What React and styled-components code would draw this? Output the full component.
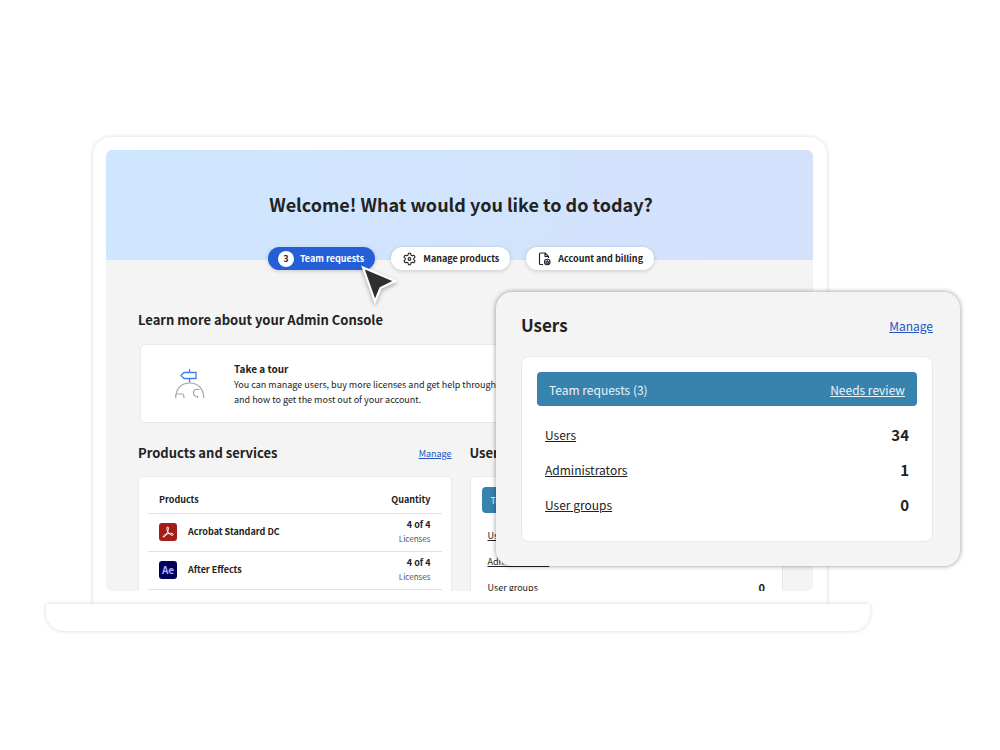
import React from 'react';
import styled, { createGlobalStyle } from 'styled-components';

const GlobalStyle = createGlobalStyle`
  * {
    box-sizing: border-box;
  }

  body {
    margin: 0;
    background: #fff;
    color: #222;
    font-family: "Noto Sans CJK SC", "Noto Sans", sans-serif;
    font-size: 10px;
  }

  h1, h2, h3, p, ul {
    margin: 0;
    padding: 0;
  }
`;

const Stage = styled.main`
  position: relative;
  padding: 137px 130px 40px 46px;
`;

/* Laptop */

const Lid = styled.div`
  margin: 0 43px 0 47px;
  padding: 13px 14px 13px 13px;
  background: #fff;
  border-radius: 18px 18px 0 0;
  box-shadow: 0 0 4px rgba(0, 0, 0, 0.16);
`;

const Base = styled.div`
  position: relative;
  height: 27px;
  background: #fff;
  border-radius: 2px 2px 18px 18px;
  box-shadow: 0 0 4px rgba(0, 0, 0, 0.16);
`;

const Screen = styled.div`
  max-height: 441px;
  overflow: hidden;
  background: #f4f4f4;
  border-radius: 6px;
`;

const Hero = styled.header`
  height: 110px;
  padding: 38px 0 0 3px;
  background: linear-gradient(100deg, #cee6ff 0%, #d2e4fd 50%, #d4e0fc 100%);
  text-align: center;
`;

const HeroTitle = styled.h1`
  font-size: 18px;
  line-height: 32px;
  font-weight: bold;
`;

const Actions = styled.nav`
  position: relative;
  display: flex;
  justify-content: center;
  gap: 16px;
  margin-top: -13px;
  padding-left: 3px;
`;

const ActionItem = styled.div`
  position: relative;
`;

const ActionButton = styled.button`
  display: flex;
  align-items: center;
  gap: ${(props) => (props.$active ? '6px' : '7px')};
  height: 23px;
  padding: 0 11px 0 ${(props) => (props.$active ? '10px' : '12px')};
  border: 0;
  border-radius: 12px;
  background: ${(props) => (props.$active ? '#245fd8' : '#fff')};
  color: ${(props) => (props.$active ? '#fff' : '#222')};
  box-shadow: 0 1px 4px rgba(0, 0, 0, 0.18);
  font-family: inherit;
  font-size: 9px;
  line-height: 22px;
  font-weight: bold;
  white-space: nowrap;
`;

const Count = styled.span`
  width: 16px;
  height: 16px;
  border-radius: 50%;
  background: #fff;
  color: #222;
  line-height: 15px;
  text-align: center;
`;

const Pointer = styled.svg`
  position: absolute;
  top: 15px;
  left: 90px;
  z-index: 1;
  filter: drop-shadow(0 2px 2px rgba(0, 0, 0, 0.3));
`;

const Content = styled.div`
  padding: 38px 30px 0 32px;
`;

const SectionTitle = styled.h2`
  font-size: 13px;
  line-height: 24px;
  font-weight: bold;
`;

const TourCard = styled.section`
  display: flex;
  align-items: center;
  gap: 29px;
  height: 79px;
  margin: 12px 0 18px 2px;
  padding-left: 34px;
  background: #fff;
  border: 1px solid #e9e9e9;
  border-radius: 5px;
  white-space: nowrap;
`;

const TourTitle = styled.h3`
  font-size: 10px;
  line-height: 16px;
`;

const TourText = styled.p`
  font-size: 9px;
  line-height: 15px;
`;

const Columns = styled.div`
  display: grid;
  grid-template-columns: 1fr 1fr;
  gap: 18px;
`;

const PanelHead = styled.div`
  display: flex;
  align-items: center;
  justify-content: space-between;
  margin-bottom: ${(props) => (props.$large ? '17px' : '11px')};
`;

const PanelTitle = styled(SectionTitle)`
  font-size: ${(props) => (props.$large ? '17px' : '13px')};
  line-height: ${(props) => (props.$large ? '28px' : '24px')};
`;

const ManageLink = styled.a`
  color: #2255c4;
  font-size: ${(props) => (props.$large ? '12px' : '9px')};
  text-underline-offset: 1px;
`;

const Card = styled.div`
  background: #fff;
  border: 1px solid #e9e9e9;
  border-radius: ${(props) => (props.$large ? '8px' : '5px')};
  padding: ${(props) => (props.$large ? '15px 15px 19px' : '10px 11px 16px')};
`;

const ProductCard = styled(Card)`
  padding: 10px 9px;
`;

const ProductTable = styled.table`
  width: 100%;
  border-collapse: collapse;
  font-size: 9px;

  th {
    height: 26px;
    text-align: left;
    line-height: 14px;
  }

  td {
    height: 38px;
    padding: 0;
    font-weight: bold;
    line-height: 14px;
  }

  tr {
    border-bottom: 1px solid #e1e1e1;
  }

  th:first-child,
  td:first-child {
    padding: 0 0 0 11px;
  }

  th:last-child,
  td:last-child {
    padding: 0 11px 0 0;
    text-align: right;
  }
`;

const Product = styled.div`
  display: flex;
  align-items: center;
  gap: 11px;
`;

const AppTile = styled.span`
  display: flex;
  align-items: center;
  justify-content: center;
  width: 18px;
  height: 18px;
  border-radius: 3px;
  background: ${(props) => props.$background};
  color: #b3aaff;
  font-size: 10px;
  line-height: 16px;
`;

const Licenses = styled.span`
  display: block;
  color: #555;
  font-size: 8px;
  font-weight: normal;
`;

const RequestBar = styled.div`
  display: flex;
  align-items: center;
  justify-content: space-between;
  height: ${(props) => (props.$large ? '34px' : '26px')};
  margin-bottom: ${(props) => (props.$large ? '11px' : '9px')};
  padding: 0 ${(props) => (props.$large ? '12px' : '9px')};
  background: #3883ae;
  border-radius: 4px;
  color: #e8f4fb;
  font-size: ${(props) => (props.$large ? '12px' : '9px')};

  a {
    color: inherit;
    text-underline-offset: 1px;
  }
`;

const StatList = styled.ul`
  list-style: none;
  padding: 0 ${(props) => (props.$large ? '8px' : '6px')};
`;

const Stat = styled.li`
  display: flex;
  align-items: center;
  justify-content: space-between;
  height: ${(props) => (props.$large ? '35px' : '26px')};
  font-size: ${(props) => (props.$large ? '12px' : '9px')};

  a {
    color: #222;
    text-underline-offset: 1px;
  }

  b {
    font-size: ${(props) => (props.$large ? '15px' : '11px')};
  }
`;

const Overlay = styled.section`
  position: absolute;
  top: 292px;
  right: 40px;
  width: 464px;
  padding: 19px 27px 24px 25px;
  background: #f4f4f4;
  border-radius: 16px;
  box-shadow: 0 0 5px rgba(0, 0, 0, 0.42);
`;

const stats = [
  { label: 'Users', value: 34 },
  { label: 'Administrators', value: 1 },
  { label: 'User groups', value: 0 },
];

const GearIcon = () => (
  <svg width="13" height="14" viewBox="0 0 24 24" fill="none" stroke="#222" strokeWidth="2" strokeLinejoin="round">
    <path d="M10 1.500h4l.7 3.200 2.300 1.300 3.200-1 2 3.500-2.400 2.200v2.600l2.400 2.200-2 3.500-3.200-1-2.300 1.300-.7 3.200h-4l-.7-3.200L7 18l-3.200 1-2-3.500 2.400-2.200v-2.600L1.800 8.500l2-3.500L7 6l2.300-1.300z" />
    <circle cx="12" cy="12" r="2.500" />
  </svg>
);

const BillingIcon = () => (
  <svg width="13" height="14" viewBox="0 0 26 28" fill="none" stroke="#222" strokeWidth="2.200" strokeLinejoin="round">
    <path d="M10 25H5a2 2 0 0 1-2-2V4a2 2 0 0 1 2-2h9l7 7v3M14 2v7h7" />
    <circle cx="18.500" cy="20" r="5.500" />
    <path d="M18.500 16.500v2M16 22.500v-3h5v3z" />
  </svg>
);

const TourIcon = () => (
  <svg width="30" height="32" viewBox="0 0 30 32" fill="none">
    <path d="M14.500 1v3.500M14.500 10.500v4M9 4.500h12v6H9l-3-3z" stroke="#3f80e8" strokeWidth="1.300" />
    <path
      d="M.7 30C.7 20.500 6.500 15 14.700 15s14 5.500 14 15M1.500 26h5.500c1.500 0 2 1 2 4M24.500 21.500h-3.500c-2 0-2.500 1-2.500 3.500 0 2.500 1 3.500 4 3.500V30"
      stroke="#a3a3a3"
      strokeWidth="1.200"
    />
  </svg>
);

const AcrobatIcon = () => (
  <svg width="14" height="14" viewBox="0 0 28 28" fill="none" stroke="#fff" strokeWidth="2">
    <path d="M12.500 4c3-1 2.500 4 1.500 7-1.500 5-5 12-8 13-3 .5-2-3 3-5 4-1.800 10-3 13-2 4 1 3 4 0 3.500-4-.5-8-5-9.500-10-.8-3-.8-5.800 0-6.500z" />
  </svg>
);

const UsersPanel = ({ large }) => (
  <div>
    <PanelHead $large={large}>
      <PanelTitle $large={large}>Users</PanelTitle>
      <ManageLink href="#users" $large={large}>Manage</ManageLink>
    </PanelHead>
    <Card $large={large}>
      <RequestBar $large={large}>
        <span>Team requests (3)</span>
        <a href="#review">Needs review</a>
      </RequestBar>
      <StatList $large={large}>
        {stats.map((stat) => (
          <Stat key={stat.label} $large={large}>
            <a href="#list">{stat.label}</a>
            <b>{stat.value}</b>
          </Stat>
        ))}
      </StatList>
    </Card>
  </div>
);

const ProductRow = ({ name, background, children }) => (
  <tr>
    <td>
      <Product>
        <AppTile $background={background}>{children}</AppTile>
        {name}
      </Product>
    </td>
    <td>
      4 of 4
      <Licenses>Licenses</Licenses>
    </td>
  </tr>
);

const App = () => {
  return (
    <>
      <GlobalStyle />
      <Stage>
        <Lid>
          <Screen>
            <Hero>
              <HeroTitle>Welcome! What would you like to do today?</HeroTitle>
            </Hero>
            <Actions>
              <ActionItem>
                <ActionButton $active>
                  <Count>3</Count>
                  Team requests
                </ActionButton>
                <Pointer width="44" height="46" viewBox="0 0 44 46">
                  <path d="M5 5.500l32 13.500-14.500 7L17 39.500z" fill="#2f2f2f" stroke="#fff" strokeWidth="2.200" />
                </Pointer>
              </ActionItem>
              <ActionButton><GearIcon />Manage products</ActionButton>
              <ActionButton><BillingIcon />Account and billing</ActionButton>
            </Actions>
            <Content>
              <SectionTitle>Learn more about your Admin Console</SectionTitle>
              <TourCard>
                <TourIcon />
                <div>
                  <TourTitle>Take a tour</TourTitle>
                  <TourText>
                    You can manage users, buy more licenses and get help through the console
                    <br />
                    and how to get the most out of your account.
                  </TourText>
                </div>
              </TourCard>
              <Columns>
                <div>
                  <PanelHead>
                    <PanelTitle>Products and services</PanelTitle>
                    <ManageLink href="#products">Manage</ManageLink>
                  </PanelHead>
                  <ProductCard>
                    <ProductTable>
                      <thead>
                        <tr>
                          <th>Products</th>
                          <th>Quantity</th>
                        </tr>
                      </thead>
                      <tbody>
                        <ProductRow name="Acrobat Standard DC" background="#a61c17">
                          <AcrobatIcon />
                        </ProductRow>
                        <ProductRow name="After Effects" background="#00005b">Ae</ProductRow>
                      </tbody>
                    </ProductTable>
                  </ProductCard>
                </div>
                <UsersPanel />
              </Columns>
            </Content>
          </Screen>
        </Lid>
        <Base />
        <Overlay>
          <UsersPanel large />
        </Overlay>
      </Stage>
    </>
  );
};

export default App;
